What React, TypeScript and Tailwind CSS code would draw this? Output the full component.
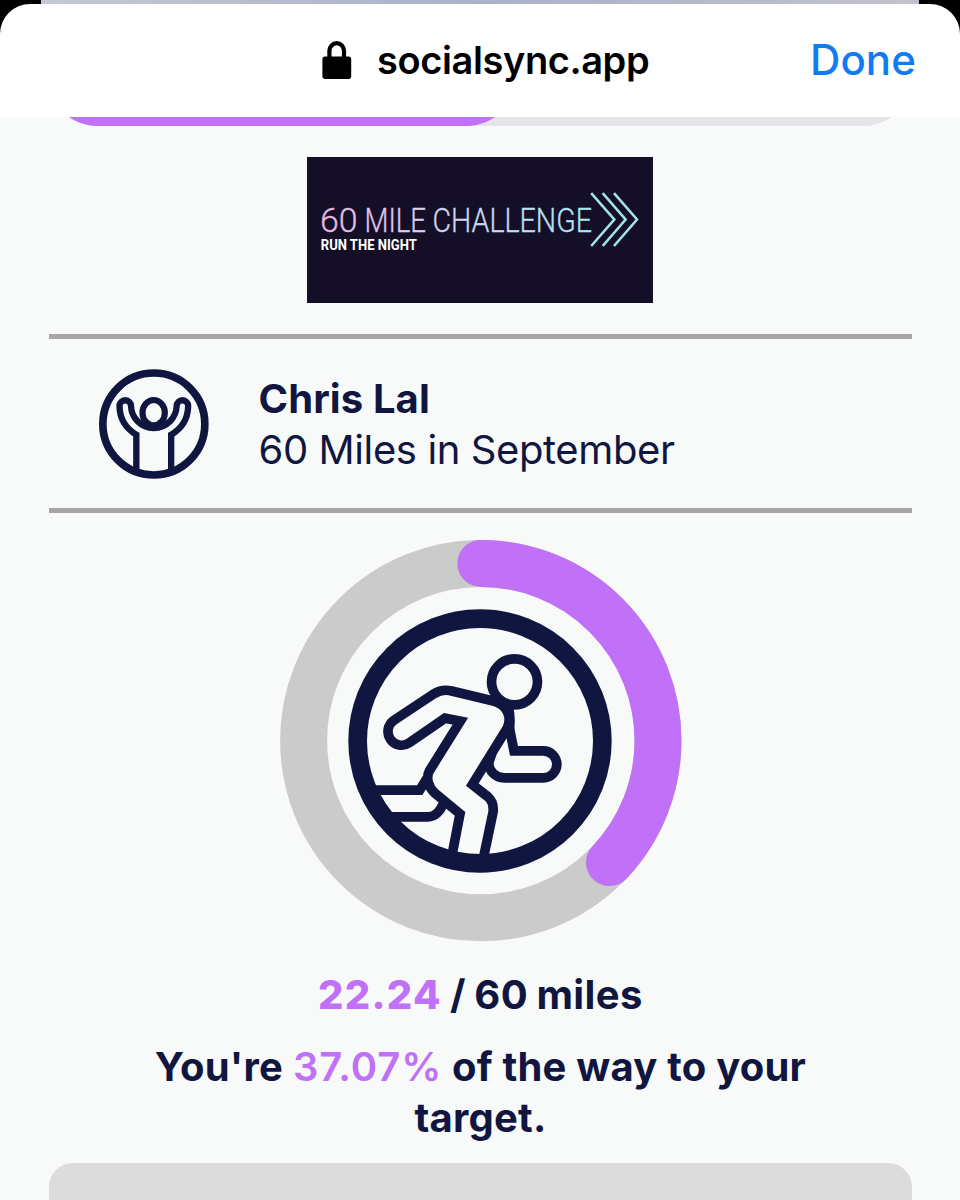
import React from 'react';

const NAVY = '#10163f';
const PURPLE = '#c171f8';

function LockIcon() {
  return (
    <svg className="h-[39px] w-[30px]" viewBox="0 0 30 39" fill="none">
      <path d="M7.4 18V9.8a7.3 7.600 0 0 1 14.600 0V18" stroke="#000" strokeWidth="4.2" />
      <rect x="0.4" y="15.4" width="28.8" height="22.5" rx="2.6" fill="#000" />
    </svg>
  );
}

function Header() {
  return (
    <header className="h-[117px] bg-black">
      <div className="mx-[41px] h-[4px] bg-linear-to-r from-[#c3c9d2] via-[#a9b2ca] to-[#c2c2cc]" />
      <div className="flex h-[113px] items-center rounded-t-[30px] bg-white pr-[44px] pl-[322px]">
        <LockIcon />
        <span className="mb-[2px] ml-[25px] text-[38px] leading-[46px] font-semibold tracking-[-0.4px] whitespace-nowrap text-black">
          socialsync.app
        </span>
        <button className="mb-[2px] ml-auto text-[42px] leading-[46px] font-medium tracking-[0.1px] text-[#0f7bf5]">Done</button>
      </div>
    </header>
  );
}

function Banner() {
  return (
    <svg className="ml-[258px] h-[146px] w-[346px] bg-[#140f26]" viewBox="307 157 346 146" fill="none">
      <defs>
        <linearGradient id="neon" gradientUnits="userSpaceOnUse" x1="321" y1="0" x2="591" y2="0">
          <stop offset="0" stopColor="#f0b4dc" />
          <stop offset="0.4" stopColor="#d8d0ee" />
          <stop offset="1" stopColor="#a4e8f2" />
        </linearGradient>
      </defs>
      <g fontFamily="Roboto, sans-serif" fontWeight="300" fontSize="33.5" fill="url(#neon)" stroke="url(#neon)" strokeWidth="0.3">
        <text x="320" y="231.5" textLength="37.500" lengthAdjust="spacingAndGlyphs">60</text>
        <text x="364.500" y="231.5" textLength="61.500" lengthAdjust="spacingAndGlyphs">MILE</text>
        <text x="432.500" y="231.5" textLength="159.500" lengthAdjust="spacingAndGlyphs">CHALLENGE</text>
      </g>
      <text x="320.8" y="250" fontFamily="Roboto, sans-serif" fontWeight="700" fontSize="14.5" fill="#fff" textLength="96" lengthAdjust="spacingAndGlyphs">
        RUN THE NIGHT
      </text>
      <path
        d="M591.200 193.200 614.300 219.5 591.200 246M602.700 193.200 625.600 219.5 602.700 246M614 193.200 637 219.5 614 246"
        stroke="#a0e2ee"
        strokeWidth="2.6"
      />
    </svg>
  );
}

function CheerIcon() {
  return (
    <svg className="h-[110px] w-[110px]" viewBox="177 131 330 330" fill="none" stroke={NAVY}>
      <circle cx="341.5" cy="296" r="153" strokeWidth="23" />
      <ellipse cx="341" cy="262" rx="33.5" ry="38" strokeWidth="18.5" />
      <path
        d="M289 440V328C252 306 239 274 238.500 242A17.200 17.200 0 0 1 273 242C274 276 302 308 341.500 308C381 308 409 276 410 242A17.200 17.200 0 0 1 444.500 242C444 274 431 306 393.500 328V440"
        strokeWidth="19"
      />
    </svg>
  );
}

function Gauge({ percent }: { percent: number }) {
  return (
    <svg className="ml-[231px] h-[402px] w-[402px]" viewBox="280 540 402 402" fill="none">
      <circle cx="480.800" cy="740.600" r="177.2" stroke="#cbcbcb" strokeWidth="47" />
      <circle
        cx="480.800"
        cy="740.600"
        r="177.2"
        stroke={PURPLE}
        strokeWidth="47"
        strokeLinecap="round"
        pathLength="100"
        strokeDasharray={`${percent} 100`}
        transform="rotate(-90 480.8 740.6)"
      />
      <g transform="translate(340 600.2) scale(0.33333)" stroke={NAVY} strokeWidth="29">
        <circle cx="420" cy="422.5" r="367" strokeWidth="56" />
        <circle cx="523.5" cy="245" r="69" />
        <path d="M337 273Q307 265 283 280L162 360A41 41 0 0 0 208 428L315 354 361 363 268 512C256 535 268 565 285 579L360 641 336 765" />
        <path d="M335 272.500 460 302.500C500 312 518 350 501 385L397 553 444 590Q463 606 459 637L431 770" />
        <path d="M506 372 522 452H610A40.500 40.500 0 0 1 610 533H492C467 533 446 512 446 488L456 458" />
        <path d="M505 322Q513 350 508 388" />
        <path d="M95 570H239L261 534M140 650H264C285 650 302 632 309 612" />
      </g>
    </svg>
  );
}

export default function App() {
  return (
    <div className="h-[1200px] overflow-hidden bg-[#f8faf9] font-['Inter',sans-serif] text-[#10163f]">
      <Header />
      <main className="ml-[49px] w-[863px]">
        <div className="flex h-[9px] items-end overflow-hidden">
          <div className="h-24 w-full shrink-0 rounded-full bg-[#e5e4e9]">
            <div className="h-full w-[466px] rounded-full bg-[#c171f8]" />
          </div>
        </div>
        <div className="flex pt-[31px]">
          <Banner />
        </div>
        <section className="mt-[31px] flex h-[179px] items-center border-y-[5px] border-[#a6a6a6] pl-[49.5px]">
          <CheerIcon />
          <div className="ml-[50px] text-[40px] leading-[51px] whitespace-nowrap">
            <h1 className="font-bold tracking-[0.1px]">Chris Lal</h1>
            <p className="tracking-[-0.4px]">60 Miles in September</p>
          </div>
        </section>
        <div className="mt-[27px] flex">
          <Gauge percent={37.07} />
        </div>
        <div className="mt-[27px] text-center text-[40px] leading-[51px] font-bold tracking-[0.22px] whitespace-nowrap">
          <p>
            <span className="font-extrabold tracking-[1.2px] text-[#c171f8]">22.24</span>
            <span className="tracking-[0.4px] [word-spacing:-1.5px]"> / 60 miles</span>
          </p>
          <p className="mt-[21px]">
            You're <span className="font-semibold tracking-[0.9px] text-[#c171f8]">37.07%</span> of the way to your
            <br />
            target.
          </p>
        </div>
        <div className="mt-[20px] h-20 rounded-t-3xl bg-[#dcdcdc]" />
      </main>
    </div>
  );
}
